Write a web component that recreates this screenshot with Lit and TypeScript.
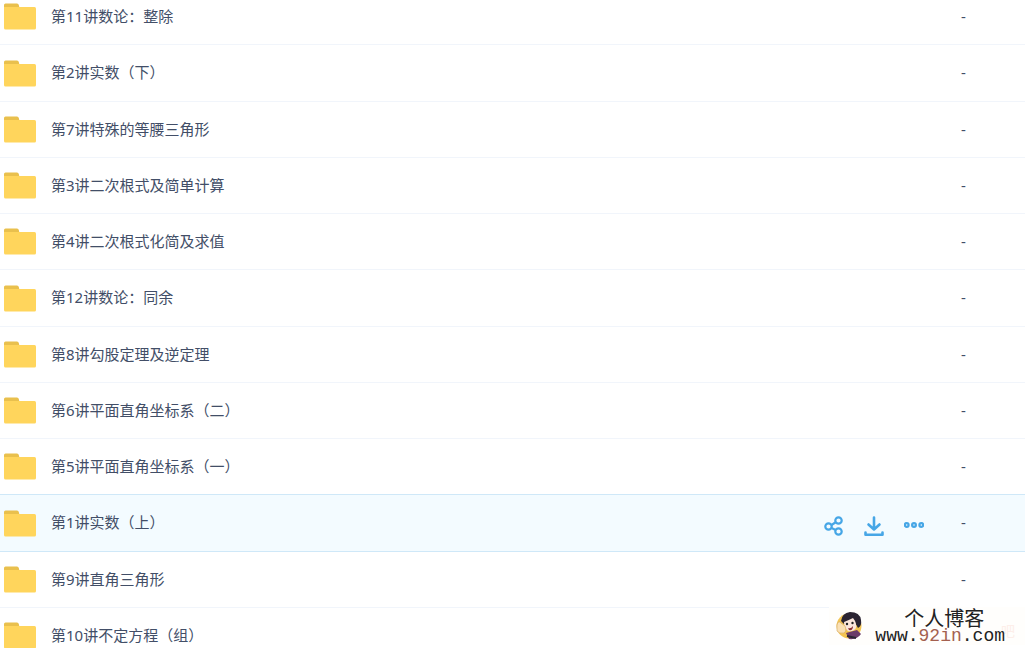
import { LitElement, html, css, svg } from "lit";
import { customElement, state } from "lit/decorators.js";
import { classMap } from "lit/directives/class-map.js";

interface Folder {
  name: string;
  size: string;
}

const folders: Folder[] = [
  "第11讲数论：整除",
  "第2讲实数（下）",
  "第7讲特殊的等腰三角形",
  "第3讲二次根式及简单计算",
  "第4讲二次根式化简及求值",
  "第12讲数论：同余",
  "第8讲勾股定理及逆定理",
  "第6讲平面直角坐标系（二）",
  "第5讲平面直角坐标系（一）",
  "第1讲实数（上）",
  "第9讲直角三角形",
  "第10讲不定方程（组）",
].map((name) => ({ name, size: "-" }));

const folderIcon = html`<svg class="folder" viewBox="0 0 32 27" aria-hidden="true">
  <path d="M0 8V2Q0 .5 1.500 .5H13Q14.500 .5 14.800 2L15.500 5V8Z" fill="#e9c04d" />
  <path d="M0 4H30.500Q32 4 32 5.500V25Q32 26.500 30.500 26.500H1.500Q0 26.500 0 25Z" fill="#ffd55c" />
</svg>`;

const icons = {
  share: svg`<g fill="none" stroke="#46a6e6" stroke-width="2.200">
    <circle cx="4.500" cy="10.500" r="3.200" />
    <circle cx="14.500" cy="4.500" r="3.200" />
    <circle cx="14.500" cy="15.500" r="3.200" />
    <path d="M7.500 9 11.700 6.300M7.500 12 11.700 14" />
  </g>`,
  download: svg`<g fill="none" stroke="#46a6e6" stroke-width="2.600" stroke-linejoin="round" stroke-linecap="round">
    <path d="M10 1.500V13M4.500 8.500 10 13.500 15.500 8.500" />
    <path d="M1.500 16.500V18.700H18.500V16.500" />
  </g>`,
  more: svg`<g fill="none" stroke="#46a6e6" stroke-width="2.200">
    <circle cx="2.700" cy="9" r="1.900" />
    <circle cx="10" cy="9" r="1.900" />
    <circle cx="17.300" cy="9" r="1.900" />
  </g>`,
};

@customElement("blog-badge")
export class BlogBadge extends LitElement {
  static styles = css`
    :host {
      display: flex;
      align-items: center;
      gap: 12px;
      box-sizing: border-box;
      padding: 0 20px 0 6px;
      height: 38px;
      background: #fffefc;
      color: #222;
    }
    .avatar {
      width: 28px;
      height: 30px;
      flex: none;
    }
    .words {
      position: relative;
      display: flex;
      flex-direction: column;
      align-items: center;
    }
    .title {
      font: 20px/20px "Noto Sans CJK SC", sans-serif;
      padding-left: 8px;
    }
    .site {
      font: 18px/16px "Liberation Mono", monospace;
    }
    .name {
      color: #a4604f;
    }
    .stamp {
      position: absolute;
      right: 10px;
      bottom: 7px;
      font: 14px/16px "Noto Sans CJK SC", sans-serif;
      color: #fdeee9;
    }
  `;

  render() {
    return html`
      <span class="stamp">吧</span>
      <svg class="avatar" viewBox="0 0 28 30" aria-hidden="true">
        <circle cx="14" cy="15" r="12.500" fill="#f3c451" />
        <path d="M6 10Q7 2 15 1Q25 1 26 9Q27 15 23 17L18 8 9 13Z" fill="#2b2432" />
        <path d="M9 11Q14 9 18 7Q22 12 21 17Q18 21 13 20Q9 17 9 11Z" fill="#fbe6dc" />
        <circle cx="12" cy="13" r="1.200" fill="#222" />
        <circle cx="17.500" cy="12" r="1.200" fill="#222" />
        <path d="M13 17Q16 18 18 15Q18 20 14 19Z" fill="#8c2f33" />
        <path d="M11 22 22 19 26 23Q22 29 14 28Z" fill="#6b3a68" />
        <path d="M2 14Q3 9 6 12L10 15Q12 20 9 22Q4 23 2 20Z" fill="#fae0b4" stroke="#d5a860" stroke-width=".6" />
        <path d="M12 25 21 27" stroke="#2b2432" stroke-width="2" />
      </svg>
      <div class="words">
        <span class="title">个人博客</span>
        <span class="site">www.<span class="name">92in</span>.com</span>
      </div>
    `;
  }
}

@customElement("app-root")
export class AppRoot extends LitElement {
  @state() private active = 9;

  static styles = css`
    :host {
      display: block;
      position: relative;
      height: 100vh;
      overflow: hidden;
      background: #fff;
      color: #424e67;
      font: 15px/20px "Noto Sans", "Noto Sans CJK SC", sans-serif;
    }
    .list {
      list-style: none;
      margin: -11px 0 0;
      padding: 0;
    }
    .row {
      display: flex;
      align-items: center;
      box-sizing: border-box;
      height: 56px;
      padding-left: 4px;
      border-bottom: 1px solid #f1f5fb;
    }
    .row:nth-child(4n + 2) {
      height: 57px;
    }
    .row.active {
      background: #f3fbff;
    }
    .row.active,
    .row:has(+ .active) {
      border-bottom-color: #cfe8f8;
    }
    .folder {
      width: 32px;
      height: 27px;
      flex: none;
    }
    .name,
    .size {
      padding-bottom: 2px;
    }
    .name {
      flex: 1;
      margin-left: 15px;
      color: inherit;
      text-decoration: none;
    }
    .actions {
      display: flex;
      gap: 20px;
      margin-right: 37px;
      padding-top: 5px;
    }
    .action {
      display: block;
      width: 20px;
      height: 20px;
      padding: 0;
      border: 0;
      background: none;
      cursor: pointer;
    }
    .glyph {
      display: block;
      width: 20px;
      height: 20px;
    }
    .size {
      width: 64px;
    }
    .badge {
      position: absolute;
      right: 0;
      bottom: 3px;
    }
  `;

  private action(label: string, icon: unknown) {
    return html`<button class="action" type="button" aria-label=${label}>
      <svg class="glyph" viewBox="0 0 20 20" aria-hidden="true">${icon}</svg>
    </button>`;
  }

  render() {
    return html`
      <ul class="list">
        ${folders.map(
          (f, i) => html`<li
            class=${classMap({ row: true, active: i === this.active })}
            @click=${() => (this.active = i)}
          >
            ${folderIcon}
            <a class="name" href="#">${f.name}</a>
            ${i === this.active
              ? html`<div class="actions">
                  ${this.action("分享", icons.share)} ${this.action("下载", icons.download)}
                  ${this.action("更多", icons.more)}
                </div>`
              : null}
            <span class="size">${f.size}</span>
          </li>`
        )}
      </ul>
      <blog-badge class="badge"></blog-badge>
    `;
  }
}
